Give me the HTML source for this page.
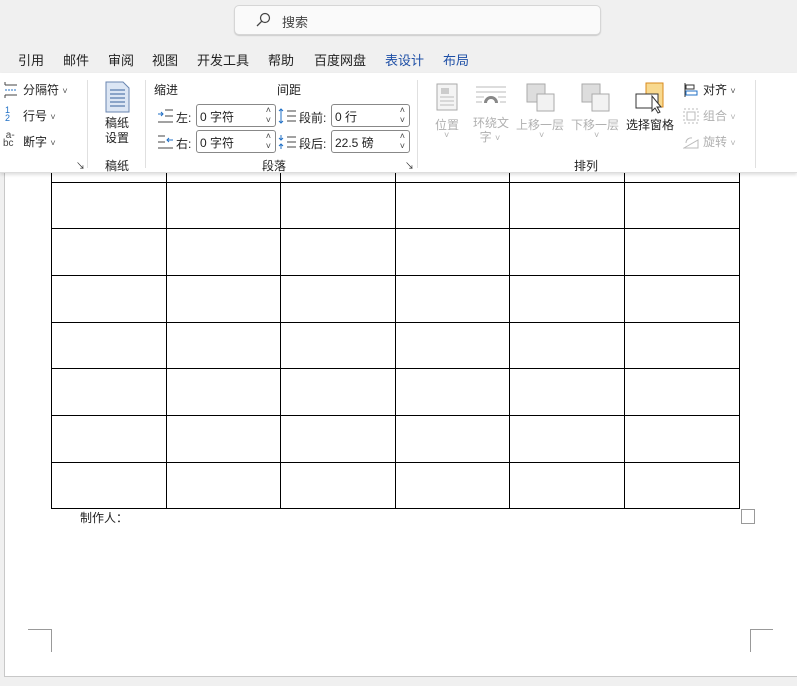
<!DOCTYPE html>
<html><head><meta charset="utf-8"><style>
*{margin:0;padding:0;box-sizing:border-box}
body{width:797px;height:686px;overflow:hidden;background:#f0f0f0;position:relative;font-family:"Liberation Sans","Noto Sans CJK SC",sans-serif;font-size:12px;color:#222}
.a{position:absolute;white-space:nowrap}
.search{left:234px;top:5px;width:367px;height:30px;background:#fafafa;border:1px solid #d6d6d6;border-radius:5px;box-shadow:0 1px 1px #ccc}
.tab{top:50px;font-size:13px;color:#222}
.rib{left:0;top:73px;width:797px;height:100px;background:#fff;border-bottom:1px solid #ddd;box-shadow:0 2px 3px rgba(0,0,0,.12)}
.sep{top:80px;width:1px;height:88px;background:#e0e0e0}
.box{height:23px;border:1px solid #888;border-radius:3px;background:#fff;font-size:12px;padding:3px 0 0 3px}
.box:after{content:"˄\A˅";white-space:pre;position:absolute;right:4px;top:0px;font-size:9px;line-height:10px;color:#444}
.gr{color:#b0b0b0}
.ch{font-size:9px;color:#555}
.page{left:4px;top:173px;width:793px;height:504px;background:#fff;border-left:1px solid #c8c8c8;border-bottom:1px solid #c8c8c8}
.vl{width:1px;background:#000}
.hl{height:1px;background:#000}
</style></head><body>
<div class="a search"><svg class="a" style="left:20px;top:6px" width="16" height="16"><circle cx="10" cy="6" r="4.5" fill="none" stroke="#444" stroke-width="1.2"/><line x1="6.8" y1="9.2" x2="2" y2="14" stroke="#444" stroke-width="1.3"/></svg><span class="a" style="left:47px;top:6px;font-size:13px;color:#444">搜索</span></div>
<span class="a tab" style="left:18px">引用</span>
<span class="a tab" style="left:63px">邮件</span>
<span class="a tab" style="left:108px">审阅</span>
<span class="a tab" style="left:152px">视图</span>
<span class="a tab" style="left:197px">开发工具</span>
<span class="a tab" style="left:268px">帮助</span>
<span class="a tab" style="left:314px">百度网盘</span>
<span class="a tab" style="left:385px;color:#1e4fa6">表设计</span>
<span class="a tab" style="left:443px;color:#1e4fa6">布局</span>

<div class="a page">
<div class="a" style="left:23px;top:456px;width:23px;height:1px;background:#999"></div>
<div class="a" style="left:46px;top:456px;width:1px;height:23px;background:#999"></div>
<div class="a" style="left:745px;top:456px;width:23px;height:1px;background:#999"></div>
<div class="a" style="left:745px;top:456px;width:1px;height:23px;background:#999"></div>
<div class="a" style="left:736px;top:336px;width:14px;height:15px;border:1px solid #999"></div>
<span class="a" style="left:75px;top:336px;font-size:12px;color:#222">制作人：</span>
</div>
<div class="a vl" style="left:51px;top:173px;height:336px"></div>
<div class="a vl" style="left:166px;top:173px;height:336px"></div>
<div class="a vl" style="left:280px;top:173px;height:336px"></div>
<div class="a vl" style="left:395px;top:173px;height:336px"></div>
<div class="a vl" style="left:509px;top:173px;height:336px"></div>
<div class="a vl" style="left:624px;top:173px;height:336px"></div>
<div class="a vl" style="left:739px;top:173px;height:336px"></div>
<div class="a hl" style="left:51px;top:182px;width:689px"></div>
<div class="a hl" style="left:51px;top:228px;width:689px"></div>
<div class="a hl" style="left:51px;top:275px;width:689px"></div>
<div class="a hl" style="left:51px;top:322px;width:689px"></div>
<div class="a hl" style="left:51px;top:368px;width:689px"></div>
<div class="a hl" style="left:51px;top:415px;width:689px"></div>
<div class="a hl" style="left:51px;top:462px;width:689px"></div>
<div class="a hl" style="left:51px;top:508px;width:689px"></div>

<div class="a rib"></div>
<svg class="a" style="left:3px;top:82px" width="16" height="16"><line x1="2" y1="3" x2="14" y2="3" stroke="#444"/><line x1="2" y1="0" x2="2" y2="3" stroke="#444"/><line x1="2" y1="8" x2="14" y2="8" stroke="#1f6fc5" stroke-dasharray="2 1"/><line x1="2" y1="13" x2="14" y2="13" stroke="#444"/><line x1="2" y1="13" x2="2" y2="16" stroke="#444"/></svg>
<span class="a" style="left:23px;top:81px">分隔符 <span class="ch">˅</span></span>
<span class="a" style="left:5px;top:106px;font-size:9px;line-height:8px;color:#1f6fc5">1<br>2</span>
<span class="a" style="left:23px;top:107px">行号 <span class="ch">˅</span></span>
<span class="a" style="left:3px;top:132px;font-size:10px;line-height:8px;color:#444">&nbsp;a-<br>bc</span>
<span class="a" style="left:23px;top:133px">断字 <span class="ch">˅</span></span>
<span class="a" style="left:76px;top:159px;font-size:9px">↘</span>
<div class="a sep" style="left:87px"></div>
<svg class="a" style="left:105px;top:81px" width="25" height="32"><path d="M1 1H18L24 7V31H1Z" fill="#dce6f4" stroke="#6a86b0"/><g fill="#8aa4c8"><rect x="5" y="8" width="15" height="2"/><rect x="5" y="12" width="15" height="2"/><rect x="5" y="16" width="15" height="2"/><rect x="5" y="20" width="15" height="2"/><rect x="5" y="24" width="15" height="2"/></g></svg>
<span class="a" style="left:105px;top:116px;line-height:15px">稿纸<br>设置</span>
<span class="a" style="left:105px;top:157px">稿纸</span>
<div class="a sep" style="left:145px"></div>
<span class="a" style="left:154px;top:81px">缩进</span>
<span class="a" style="left:277px;top:81px">间距</span>
<svg class="a" style="left:157px;top:109px" width="16" height="14"><g stroke="#444"><line x1="8" y1="1" x2="16" y2="1"/><line x1="8" y1="7" x2="16" y2="7"/><line x1="1" y1="13" x2="16" y2="13"/></g><path d="M1 5H6M4 3L6 5L4 7" fill="none" stroke="#1f6fc5"/></svg>
<span class="a" style="left:176px;top:109px">左:</span>
<div class="a box" style="left:196px;top:104px;width:80px">0 字符</div>
<svg class="a" style="left:157px;top:135px" width="16" height="14"><g stroke="#444"><line x1="1" y1="1" x2="8" y2="1"/><line x1="1" y1="7" x2="8" y2="7"/><line x1="1" y1="13" x2="16" y2="13"/></g><path d="M10 5H16M12 3L10 5L12 7" fill="none" stroke="#1f6fc5"/></svg>
<span class="a" style="left:176px;top:135px">右:</span>
<div class="a box" style="left:196px;top:130px;width:80px">0 字符</div>
<svg class="a" style="left:278px;top:108px" width="20" height="16"><path d="M3 1V15M1 3L3 1L5 3M1 13L3 15L5 13" fill="none" stroke="#1f6fc5"/><g stroke="#444"><line x1="9" y1="3" x2="18" y2="3"/><line x1="9" y1="8" x2="18" y2="8"/><line x1="9" y1="13" x2="18" y2="13"/></g></svg>
<span class="a" style="left:299px;top:109px">段前:</span>
<div class="a box" style="left:331px;top:104px;width:79px">0 行</div>
<svg class="a" style="left:278px;top:134px" width="20" height="16"><path d="M3 1V6M1 4L3 6L5 4M3 10V15M1 12L3 10L5 12" fill="none" stroke="#1f6fc5"/><g stroke="#444"><line x1="9" y1="3" x2="18" y2="3"/><line x1="9" y1="8" x2="18" y2="8"/><line x1="9" y1="13" x2="18" y2="13"/></g></svg>
<span class="a" style="left:299px;top:135px">段后:</span>
<div class="a box" style="left:331px;top:130px;width:79px">22.5 磅</div>
<span class="a" style="left:262px;top:157px">段落</span>
<span class="a" style="left:405px;top:159px;font-size:9px">↘</span>
<div class="a sep" style="left:417px"></div>
<svg class="a" style="left:436px;top:83px" width="22" height="28"><rect x="1" y="1" width="20" height="26" fill="#f4f4f4" stroke="#aaa"/><rect x="5" y="5" width="8" height="6" fill="#ccc"/><g stroke="#bbb"><line x1="4" y1="14" x2="18" y2="14"/><line x1="4" y1="18" x2="18" y2="18"/><line x1="4" y1="22" x2="18" y2="22"/></g></svg>
<span class="a gr" style="left:435px;top:116px">位置</span><span class="a gr" style="left:444px;top:130px;font-size:9px">˅</span>
<svg class="a" style="left:476px;top:85px" width="30" height="22"><g stroke="#bbb"><line x1="0" y1="2" x2="30" y2="2"/><line x1="0" y1="7" x2="30" y2="7"/><line x1="0" y1="12" x2="8" y2="12"/><line x1="22" y1="12" x2="30" y2="12"/><line x1="0" y1="17" x2="6" y2="17"/><line x1="24" y1="17" x2="30" y2="17"/></g><path d="M8 18A7 7 0 0 1 22 18H19A4 4 0 0 0 11 18Z" fill="#888"/></svg>
<span class="a gr" style="left:473px;top:116px;line-height:14px">环绕文<br>&nbsp;&nbsp;字 <span style="font-size:9px">˅</span></span>
<svg class="a" style="left:526px;top:83px" width="30" height="30"><rect x="1" y="1" width="18" height="18" fill="#ddd" stroke="#aaa"/><rect x="11" y="11" width="17" height="17" fill="#f2f2f2" stroke="#aaa"/></svg>
<span class="a gr" style="left:516px;top:116px">上移一层</span><span class="a gr" style="left:539px;top:130px;font-size:9px">˅</span>
<svg class="a" style="left:581px;top:83px" width="30" height="30"><rect x="1" y="1" width="18" height="18" fill="#ddd" stroke="#aaa"/><rect x="11" y="11" width="17" height="17" fill="#f2f2f2" stroke="#aaa"/></svg>
<span class="a gr" style="left:571px;top:116px">下移一层</span><span class="a gr" style="left:594px;top:130px;font-size:9px">˅</span>
<svg class="a" style="left:635px;top:82px" width="32" height="32"><rect x="11" y="1" width="17" height="24" fill="#f8d98f" stroke="#d98a1c"/><rect x="1" y="12" width="22" height="14" fill="#fff" stroke="#333"/><path d="M17 14V29L20 26L23 31L25 30L22 25H26Z" fill="#fff" stroke="#333"/></svg>
<span class="a" style="left:626px;top:116px">选择窗格</span>
<span class="a" style="left:574px;top:157px">排列</span>
<svg class="a" style="left:683px;top:82px" width="16" height="16"><line x1="2" y1="1" x2="2" y2="15" stroke="#333"/><rect x="3" y="3" width="8" height="4" fill="none" stroke="#333"/><rect x="3" y="9" width="11" height="4" fill="none" stroke="#1f6fc5"/></svg>
<span class="a" style="left:703px;top:81px">对齐 <span class="ch">˅</span></span>
<svg class="a" style="left:683px;top:108px" width="16" height="16"><rect x="1" y="1" width="14" height="14" fill="none" stroke="#bbb" stroke-dasharray="2 2"/><rect x="4" y="4" width="8" height="8" fill="none" stroke="#bbb"/></svg>
<span class="a gr" style="left:703px;top:107px">组合 <span style="font-size:9px">˅</span></span>
<svg class="a" style="left:683px;top:134px" width="16" height="16"><path d="M1 14H15L15 6Z" fill="none" stroke="#bbb"/><path d="M3 9A5 5 0 0 1 9 4" fill="none" stroke="#bbb"/></svg>
<span class="a gr" style="left:703px;top:133px">旋转 <span style="font-size:9px">˅</span></span>
<div class="a sep" style="left:755px"></div>
</body></html>
